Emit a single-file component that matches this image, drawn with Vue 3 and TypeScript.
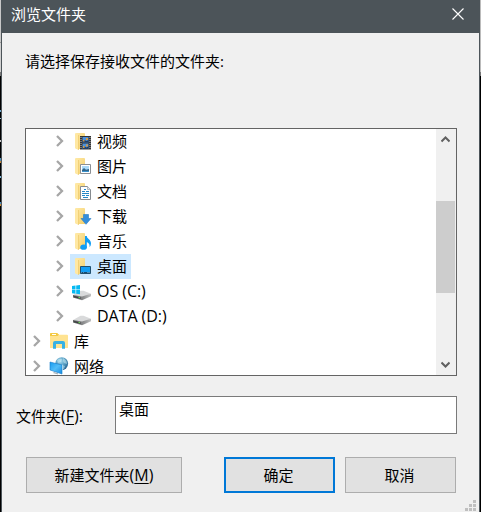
<script setup lang="ts">
interface TreeNode {
  label: string
  icon: 'video' | 'picture' | 'document' | 'download' | 'music' | 'desktop' | 'os' | 'drive' | 'library' | 'network'
  root?: boolean
  selected?: boolean
}

const nodes: TreeNode[] = [
  { label: '视频', icon: 'video' },
  { label: '图片', icon: 'picture' },
  { label: '文档', icon: 'document' },
  { label: '下载', icon: 'download' },
  { label: '音乐', icon: 'music' },
  { label: '桌面', icon: 'desktop', selected: true },
  { label: 'OS (C:)', icon: 'os' },
  { label: 'DATA (D:)', icon: 'drive' },
  { label: '库', icon: 'library', root: true },
  { label: '网络', icon: 'network', root: true },
]

const folderIcons = ['video', 'picture', 'document', 'download', 'music', 'desktop']
const driveIcons = ['os', 'drive']
const gripDots = [[8, 0], [4, 4], [8, 4], [0, 8], [4, 8], [8, 8]]
</script>

<template>
  <div class="screen">
    <div class="behind left"></div>
    <section class="dialog">
      <header class="titlebar">
        <span class="title">浏览文件夹</span>
        <svg class="close" width="12" height="12" viewBox="0 0 12 12"><path d="M.5 .5 11.5 11.5M11.5 .5 .5 11.5" /></svg>
      </header>
      <div class="body">
        <p class="prompt">请选择保存接收文件的文件夹:</p>
        <div class="tree">
          <svg class="defs" width="0" height="0">
            <defs>
              <linearGradient id="folder" x1="0" y1="0" x2="1" y2="1">
                <stop offset="0" stop-color="#ffe9a6" /><stop offset="1" stop-color="#f4cf6c" />
              </linearGradient>
              <linearGradient id="metal" x1="0" y1="0" x2="1" y2="0">
                <stop offset="0" stop-color="#5c5f60" /><stop offset=".55" stop-color="#88898a" /><stop offset="1" stop-color="#c0c1c2" />
              </linearGradient>
              <linearGradient id="screenBlue" x1="0" y1="0" x2="1" y2="1">
                <stop offset="0" stop-color="#159bf0" /><stop offset=".5" stop-color="#51bdf8" /><stop offset="1" stop-color="#168ae0" />
              </linearGradient>
              <radialGradient id="globe" cx=".4" cy=".3" r=".75">
                <stop offset="0" stop-color="#a8dbf0" /><stop offset=".5" stop-color="#559dc2" /><stop offset="1" stop-color="#245f8e" />
              </radialGradient>
            </defs>
          </svg>
          <ul class="rows">
            <li v-for="node in nodes" :key="node.label" class="row" :class="{ root: node.root }">
              <svg class="chevron" width="8" height="12" viewBox="0 0 8 12"><path d="M1 1 6 6 1 11" /></svg>
              <div class="item" :class="{ selected: node.selected }">
                <svg class="icon" width="20" height="20" viewBox="0 0 20 20">
                  <g v-if="folderIcons.includes(node.icon)">
                    <path d="M4 2H12Q13 2 13 3V18H4Z" fill="url(#folder)" />
                    <path d="M3 2 6.5 4V19L3 17.3Z" fill="#ffe8a3" />
                    <path d="M6.5 4V19" stroke="#edc969" stroke-width=".7" />
                  </g>
                  <g v-if="node.icon === 'video'">
                    <path d="M8 5H19V18.5H8Z" fill="#343434" />
                    <path d="M9 6V18M18 6V18" stroke="#bcbcbc" stroke-dasharray="1 1" />
                    <path d="M10.5 6H16.5V11.5H10.5ZM10.5 12.5H16.5V18H10.5Z" fill="#4a90dc" />
                    <path d="M10.5 10 12.5 9 14.5 10 16.5 9V11.5H10.5ZM10.5 16.5 12.5 15.5 14.5 16.5 16.5 15V18H10.5Z" fill="#203f68" />
                    <path d="M11 9H12.5V10.5H11ZM14 7H16V9H14ZM11 15H12.5V17H11ZM14 13.5H16V15.5H14Z" fill="#d29b4b" />
                  </g>
                  <g v-else-if="node.icon === 'picture'">
                    <path d="M8.5 8.5H18.5V17.5H8.5Z" fill="#fff" stroke="#8b8f94" />
                    <path d="M10 10H17V16H10Z" fill="#aad9f8" />
                    <path d="M10 14 12 12 14 13.7 17 13V16H10Z" fill="#30668b" />
                    <path d="M10 15H17V16H10Z" fill="#3a93ce" />
                  </g>
                  <g v-else-if="node.icon === 'document'">
                    <path d="M8.5 5.5H15.5L18.5 8.5V18.5H8.5Z" fill="#fff" stroke="#868b90" />
                    <path d="M15.5 5.5V8.5H18.5" fill="#e4e7eb" stroke="#9aa1a8" stroke-width=".7" />
                    <path d="M12 8.5H14M10 10.5H13M14 10.5H17M10 12.5H17M10 14.5H13M14 14.5H17M11 16.5H16" stroke="#2388c9" />
                  </g>
                  <path v-else-if="node.icon === 'download'" d="M11.5 8.5H16.5V12.5H19L14 18.3 9 12.5H11.5Z" fill="#348edc" stroke="#2379c5" stroke-width=".6" />
                  <g v-else-if="node.icon === 'music'">
                    <path d="M13 5H14.5C15 8 19 8.2 19 12.5Q19 14.5 17.6 16.3C18 12.5 16 11.5 14.5 11V16Z" fill="#109ef5" />
                    <ellipse cx="11.6" cy="16.2" rx="3.3" ry="2.6" fill="#109ef5" /><path d="M13 5H14.7V16H13Z" fill="#109ef5" />
                  </g>
                  <g v-else-if="node.icon === 'desktop'">
                    <path d="M8.5 10.5H18.5V17.5H8.5Z" fill="#129df4" stroke="#22506f" />
                    <path d="M9 16.5H18" stroke="#164970" /><path d="M9 16.5H10M11 16.5H12M15 16.5H18" stroke="#77bbe5" stroke-width=".6" />
                  </g>
                  <g v-else-if="driveIcons.includes(node.icon)">
                    <path d="M1 14 8.5 9.8H11.5L19 12.8 10.3 16.8Z" fill="#d9dadb" />
                    <path d="M1 14 10 15.5 19 12.8V15.2L10 19.2 1 16.5Z" fill="url(#metal)" />
                    <path d="M2.2 15 8.6 16.5V17.8L2.2 16.3Z" fill="#3a3d3e" /><path d="M6.5 16.5H8" stroke="#6adf55" />
                    <path v-if="node.icon === 'os'" d="M0 5.1 3.5 4.6V8.4H0ZM4.2 4.5 8 4V8.4H4.2ZM0 9H3.5V12.7L0 12.2ZM4.2 9H8V13.2L4.2 12.8Z" fill="#05b9f2" />
                  </g>
                  <g v-else-if="node.icon === 'library'">
                    <path d="M1 3Q1 2 2 2H8L10 3.7H18Q19 3.7 19 4.7V17H1Z" fill="#ffe391" />
                    <path d="M1 3Q1 2 2 2H8L10 3.7 8.5 5H1Z" fill="#f3c943" /><path d="M3 3.5H7" stroke="#fff" />
                    <path d="M4 17.8V12Q4 10 6 10H14Q16 10 16 12V17.8H13V13H7V17.8Z" fill="#36b1e5" />
                  </g>
                  <g v-else-if="node.icon === 'network'">
                    <circle cx="12.7" cy="7.6" r="6.4" fill="url(#globe)" />
                    <path d="M8 4Q11 2 13 3L12 6 9 7ZM14 2Q18 4 18 8L15 7 14 5ZM13 9 16 10 15 13 12 13Z" fill="#c6e8f0" opacity=".55" />
                    <path d="M1 6 13 9V18L1 14Z" fill="url(#screenBlue)" stroke="#167ccb" stroke-width=".6" />
                    <path d="M5 16 9 17.3V18.5L4 17Z" fill="#a5b2bb" /><path d="M13 9 13.8 8.5V17.4L13 18" fill="#b4dcf3" />
                  </g>
                </svg>
                <span class="label" :class="{ latin: driveIcons.includes(node.icon) }">{{ node.label }}</span>
              </div>
            </li>
          </ul>
          <div class="scrollbar">
            <svg class="arrow" width="9" height="7" viewBox="0 0 9 7"><path d="M.5 5.5 4.5 1.5 8.5 5.5" /></svg>
            <div class="thumb"></div>
            <svg class="arrow down" width="9" height="7" viewBox="0 0 9 7"><path d="M.5 1.5 4.5 5.5 8.5 1.5" /></svg>
          </div>
        </div>
        <div class="field">
          <span class="field-label">文件夹<span class="latin">(<u>F</u>):</span></span>
          <div class="input">桌面</div>
        </div>
        <footer class="actions">
          <button class="btn create" type="button">新建文件夹<span class="latin">(<u>M</u>)</span></button>
          <button class="btn primary" type="button">确定</button>
          <button class="btn" type="button">取消</button>
        </footer>
      </div>
      <svg class="grip" width="11" height="11" viewBox="0 0 11 11">
        <rect v-for="([x, y], i) in gripDots" :key="i" :x="x" :y="y" width="3" height="3" />
      </svg>
    </section>
    <div class="behind right"></div>
  </div>
</template>

<style>
body { margin: 0; overflow: hidden; }
</style>

<style scoped>
.screen {
  display: flex;
  width: 481px;
  height: 512px;
  font: 15px/20px "Open Sans", "Noto Sans CJK SC", sans-serif;
  color: #000;
}
.behind { width: 1px; flex: none; }
.left {
  background: linear-gradient(#c8c8c8 42px, #999 42px 43px, #d0d0d0 43px 72px, #777 72px 76px, #000 76px 110px, #6ba7cc 110px 112px, #000 112px 118px, #9bc0d8 118px 119px, #000 119px 140px, #ccc 140px 142px, #000 142px 158px, #538fb6 158px 161px, #c28539 161px 163px, #000 163px 176px, #79b5d8 176px 178px, #000 178px 202px, #4f8cbb 202px 204px, #c88a3a 204px 206px, #000 206px);
}
.right { background: linear-gradient(#bbb 72px, #777 72px 76px, #000 76px); }
.dialog {
  position: relative;
  box-sizing: border-box;
  width: 479px;
  border: solid #4c5459;
  border-width: 0 1px;
  background: #f0f0f0;
}
.titlebar {
  display: flex;
  align-items: center;
  justify-content: space-between;
  height: 33px;
  box-sizing: border-box;
  padding: 0 15px 5px 9px;
  background: #4c5459;
  color: #fff;
}
.close { fill: none; stroke: #fff; stroke-width: 1.1; }
.body { padding: 18px 21px 0 23px; }
.prompt { margin: 0 0 57px; height: 20px; }
.tree {
  display: flex;
  box-sizing: border-box;
  width: 432px;
  height: 248px;
  border: 1px solid #646464;
  background: #fff;
  overflow: hidden;
}
.defs { position: absolute; }
.rows { flex: 1; margin: 0; padding: 0; list-style: none; }
.row { display: flex; align-items: flex-start; height: 25px; padding-left: 30px; }
.row.root { padding-left: 7px; }
.chevron { margin: 6px 6px 0 0; fill: none; stroke: #a6a6a6; stroke-width: 2.3; }
.item { display: flex; align-items: flex-start; box-sizing: border-box; height: 25px; padding: 2px 4px 0 2px; }
.selected { background: #cce8ff; }
.icon { margin-right: 5px; }
.label { height: 20px; white-space: nowrap; }
.latin { font-size: 16px; }
.label.latin { letter-spacing: -0.05px; }
.scrollbar {
  display: flex;
  flex-direction: column;
  align-items: center;
  width: 20px;
  box-sizing: border-box;
  padding: 7px 1px 7px 0;
  background: #f0f0f0;
}
.arrow { fill: none; stroke: #606060; stroke-width: 2; }
.thumb { width: 19px; height: 92px; margin-top: 58px; background: #cdcdcd; }
.down { margin-top: auto; }
.field { display: flex; align-items: center; margin: 20px 0 0 -9px; height: 38px; }
.field-label { width: 100px; padding-top: 2px; flex: none; }
.input {
  width: 342px;
  height: 38px;
  box-sizing: border-box;
  padding: 2px 3px;
  border: 1px solid #7a7a7a;
  background: #fff;
  flex: none;
  margin-left: -1px;
}
.actions { display: flex; margin: 23px 0 0 1px; }
.btn {
  box-sizing: border-box;
  width: 111px;
  height: 36px;
  padding: 0 2px 0 0;
  border: 1px solid #adadad;
  background: #e1e1e1;
  font: inherit;
  color: inherit;
}
.create { width: 156px; margin-right: 42px; padding-right: 0; }
.primary { border: 2px solid #0078d7; margin-right: 10px; }
.grip { position: absolute; right: 3px; bottom: 1px; fill: #bfbfbf; }
u { text-underline-offset: 2px; text-decoration-thickness: 1px; }
</style>
